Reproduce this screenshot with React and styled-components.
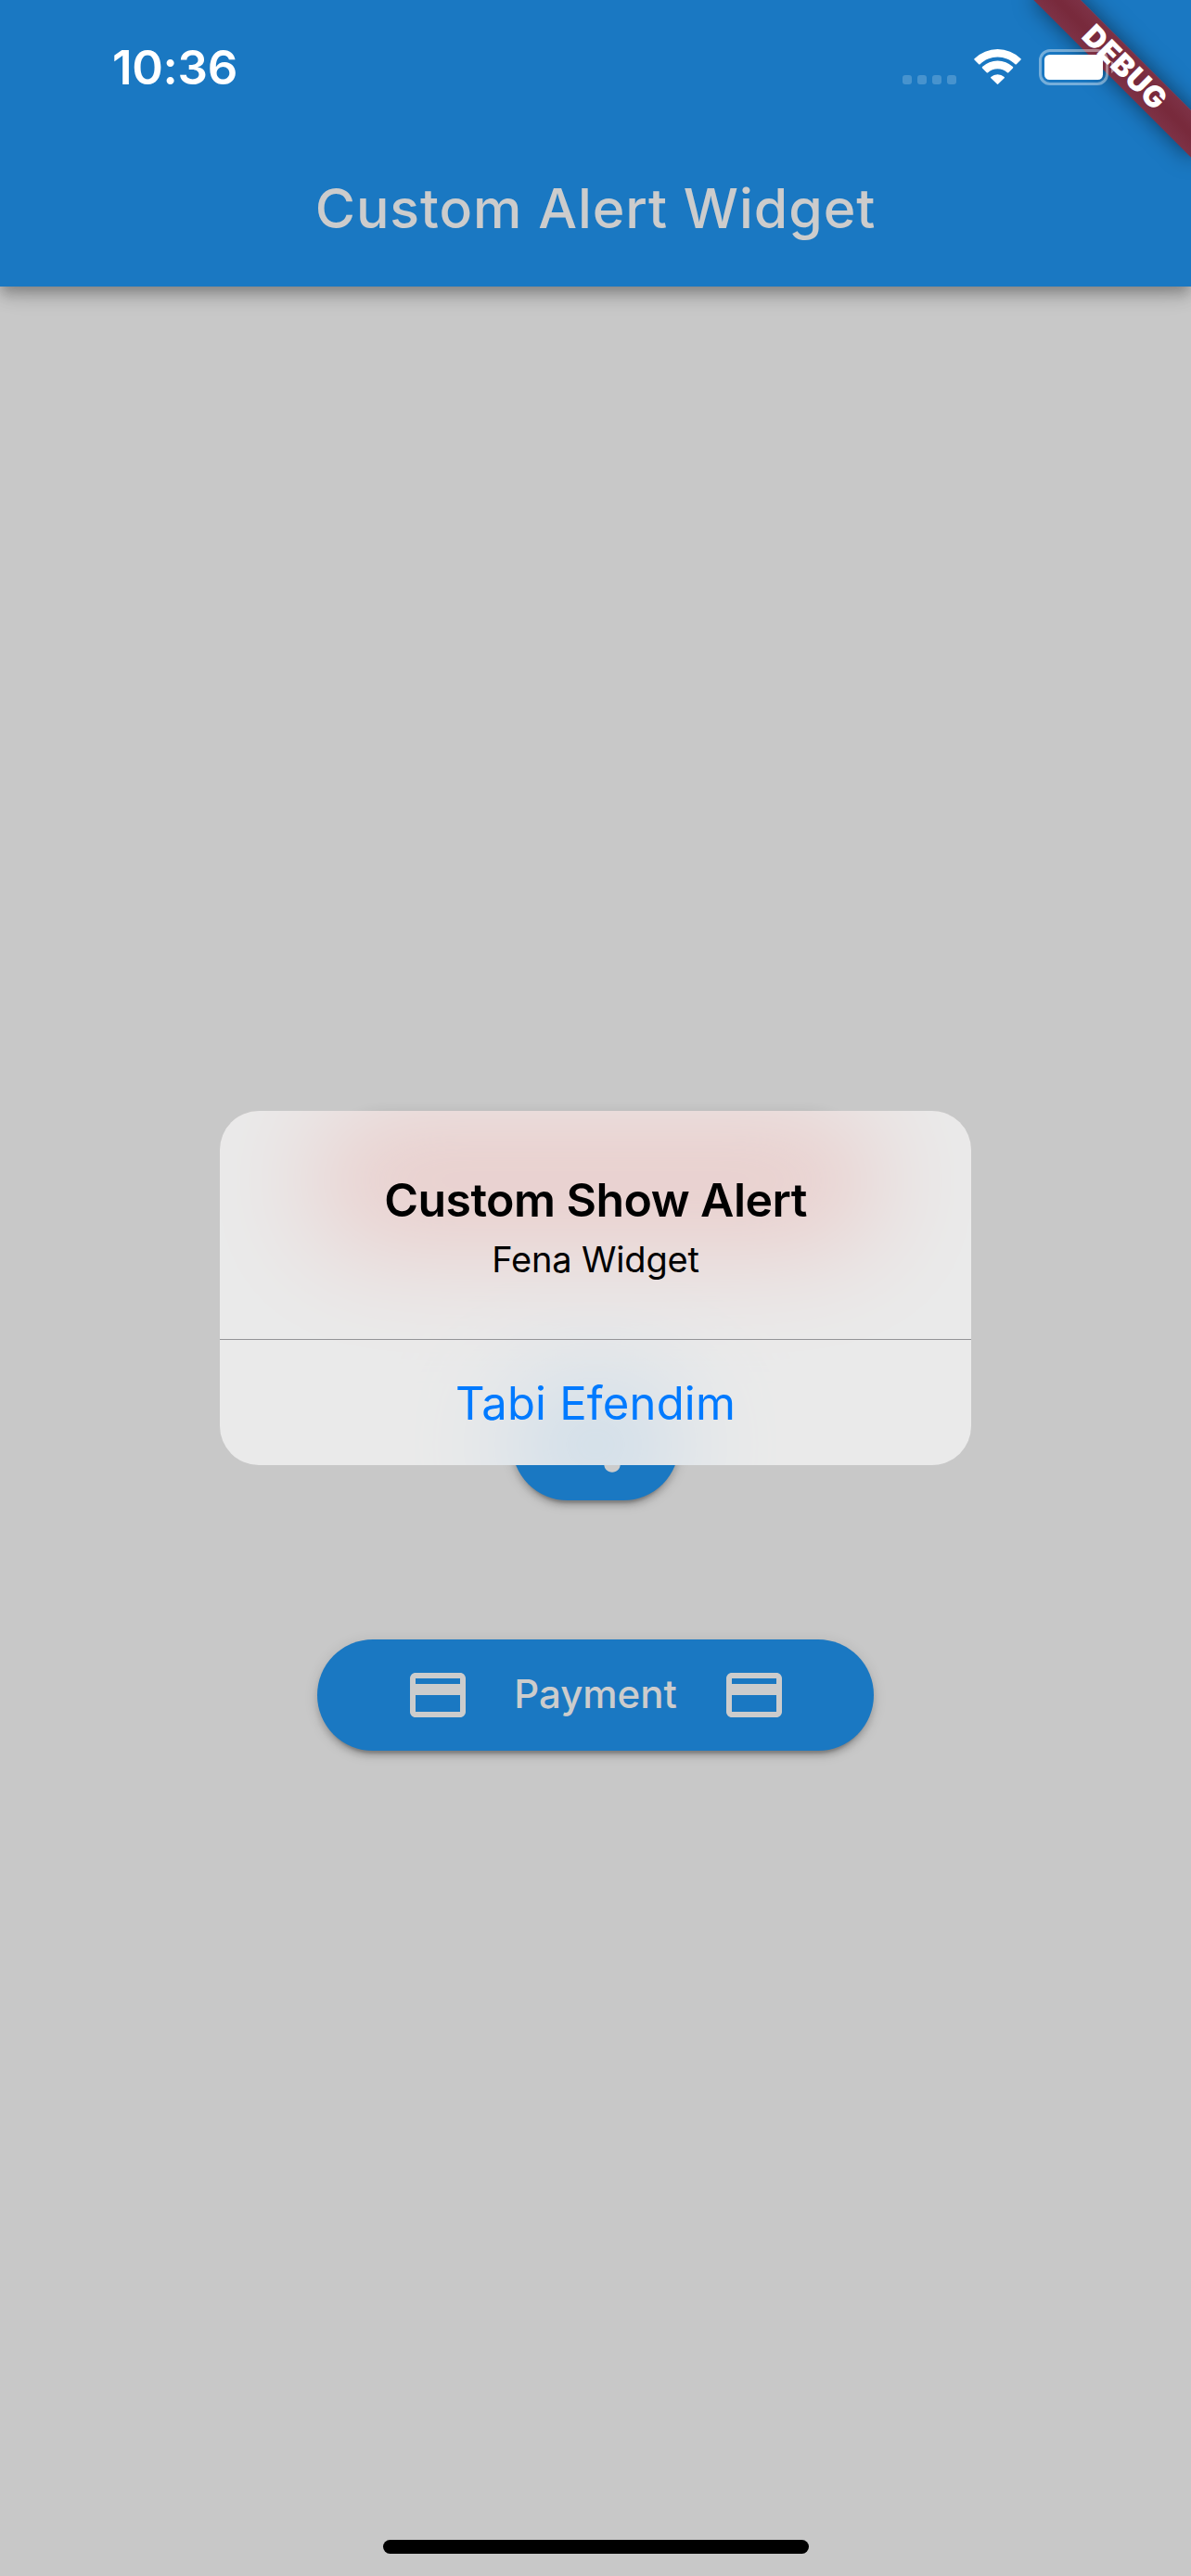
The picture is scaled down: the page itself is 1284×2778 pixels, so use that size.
import React from "react";
import styled, { createGlobalStyle, css } from "styled-components";

const GlobalStyle = createGlobalStyle`
  *, *::before { box-sizing: border-box; }
  html, body { margin: 0; padding: 0; }
  body { font-family: Inter, Roboto, "Liberation Sans", sans-serif; }
`;

const Screen = styled.div`
  position: relative;
  display: flex;
  flex-direction: column;
  width: 1284px;
  height: 2778px;
  overflow: hidden;
  background: #fafafa;
`;

const AppBar = styled.header`
  flex: none;
  display: flex;
  align-items: flex-end;
  justify-content: center;
  height: 309px;
  background: #2196f3;
  box-shadow: 0 6px 12px -3px rgba(0, 0, 0, 0.2), 0 12px 15px rgba(0, 0, 0, 0.14),
    0 3px 30px rgba(0, 0, 0, 0.12);
`;

const AppTitle = styled.h1`
  margin: 0;
  height: 168px;
  line-height: 168px;
  font-size: 59px;
  font-weight: 500;
  letter-spacing: 0.95px;
  white-space: nowrap;
  color: #fff;
`;

const Body = styled.main`
  flex: 1;
  display: flex;
  flex-direction: column;
  align-items: center;
  justify-content: center;
  gap: 150px;
  padding-bottom: 1px;
`;

const PillButton = styled.button`
  display: flex;
  align-items: center;
  justify-content: center;
  width: ${(p) => p.$width}px;
  height: ${(p) => p.$height || 120}px;
  padding: 0;
  border: 0;
  border-radius: 75px;
  background: ${(p) => p.$color || "#2196f3"};
  color: #fff;
  font: 500 42px/120px Inter, Roboto, sans-serif;
  box-shadow: 0 9px 3px -6px rgba(0, 0, 0, 0.2), 0 6px 6px rgba(0, 0, 0, 0.14),
    0 3px 15px rgba(0, 0, 0, 0.12);
`;

const ButtonLabel = styled.span`
  width: 269px;
  padding-bottom: 2px;
  text-align: center;
  white-space: nowrap;
`;

const MaterialIcon = styled.svg`
  flex: none;
  width: 72px;
  height: 72px;
  fill: currentColor;
`;

const Scrim = styled.div`
  position: absolute;
  inset: 0;
  display: flex;
  align-items: center;
  justify-content: center;
  background: rgba(0, 0, 0, 0.2);
`;

const Alert = styled.section`
  position: relative;
  display: flex;
  flex-direction: column;
  width: 810px;
  height: 382px;
  overflow: hidden;
  border-radius: 42px;
  background: #c8c8c8;
`;

/* Frosted layer: the soft glow of the buttons under the alert, veiled in light grey. */
const Frost = styled.div`
  position: absolute;
  inset: 0;

  &::after {
    content: "";
    position: absolute;
    inset: 0;
    background: rgba(242, 242, 242, 0.8);
  }
`;

const Glow = styled.div`
  position: absolute;
  top: ${(p) => p.$top}px;
  left: 50%;
  width: ${(p) => p.$width}px;
  height: ${(p) => p.$height}px;
  margin-left: ${(p) => -p.$width / 2}px;
  border-radius: 60px;
  background: ${(p) => p.$color};
  filter: blur(60px);
`;

const AlertContent = styled.div`
  position: relative;
  flex: none;
  display: flex;
  flex-direction: column;
  align-items: center;
  height: 247px;
  padding-top: 62px;
  border-bottom: 1px solid #949497;
`;

const alertText = css`
  margin: 0;
  white-space: nowrap;
  color: #000;
`;

const AlertTitle = styled.h2`
  ${alertText}
  font-size: 50px;
  line-height: 68px;
  font-weight: 600;
  letter-spacing: -0.55px;
`;

const AlertMessage = styled.p`
  ${alertText}
  font-size: 38px;
  line-height: 60px;
  font-weight: 400;
  letter-spacing: -0.15px;
`;

const AlertAction = styled.button`
  position: relative;
  flex: 1;
  min-height: 0;
  padding: 3px 0 0;
  border: 0;
  background: none;
  color: #007aff;
  font: 400 49px/100px Inter, Roboto, sans-serif;
  letter-spacing: 0.2px;
`;

const Banner = styled.div`
  position: absolute;
  top: 84px;
  left: 1164px;
  width: 240px;
  height: 36px;
  transform-origin: 120px -84px;
  transform: rotate(45deg);
  background: linear-gradient(#7d3246, #782a3c 45%, #782a3c 55%, #7d3246);
  box-shadow: 0 0 23px rgba(0, 0, 0, 0.5);
  color: #fff;
  font-size: 32px;
  font-weight: 900;
  line-height: 36px;
  letter-spacing: 0.4px;
  text-align: center;
  text-indent: 2px;
`;

const StatusBar = styled.div`
  position: absolute;
  top: 0;
  left: 0;
  right: 0;
  display: flex;
  justify-content: space-between;
  height: 141px;
  padding: 0 82px 0 121px;
  color: #fff;
`;

const Clock = styled.time`
  font-size: 51px;
  font-weight: 600;
  line-height: 146px;
  letter-spacing: -0.3px;
`;

const StatusIcons = styled.svg`
  width: 229px;
  height: 39px;
  margin-top: 53px;
  fill: #fff;
`;

const HomeIndicator = styled.div`
  position: absolute;
  bottom: 24px;
  left: 413px;
  width: 459px;
  height: 15px;
  border-radius: 8px;
  background: #000;
`;

const PaymentIcon = () => (
  <MaterialIcon viewBox="0 0 24 24">
    <path d="M20 4H4c-1.11 0-1.99.89-1.99 2L2 18c0 1.11.89 2 2 2h16c1.11 0 2-.89 2-2V6c0-1.11-.89-2-2-2zm0 14H4v-6h16v6zm0-10H4V6h16v2z" />
  </MaterialIcon>
);

const ShareIcon = () => (
  <MaterialIcon viewBox="0 0 24 24">
    <path d="M18 16.08c-.76 0-1.44.3-1.96.77L8.91 12.7c.05-.23.09-.46.09-.7s-.04-.47-.09-.7l7.05-4.11c.54.5 1.25.81 2.04.81 1.66 0 3-1.34 3-3s-1.34-3-3-3-3 1.34-3 3c0 .24.04.47.09.7L8.04 9.81C7.5 9.31 6.79 9 6 9c-1.66 0-3 1.34-3 3s1.34 3 3 3c.79 0 1.5-.31 2.04-.81l7.12 4.16c-.05.21-.08.43-.08.65 0 1.61 1.31 2.92 2.92 2.92s2.92-1.31 2.92-2.92-1.31-2.92-2.92-2.92z" />
  </MaterialIcon>
);

export default function App() {
  return (
    <>
      <GlobalStyle />
      <Screen>
        <AppBar>
          <AppTitle>Custom Alert Widget</AppTitle>
        </AppBar>
        <Body>
          <PillButton $width={600} $height={150} $color="#f44336" aria-label="Alert" />
          <PillButton $width={180} aria-label="Share">
            <ShareIcon />
          </PillButton>
          <PillButton $width={600}>
            <PaymentIcon />
            <ButtonLabel>Payment</ButtonLabel>
            <PaymentIcon />
          </PillButton>
        </Body>

        <Scrim>
          <Alert role="alertdialog">
            <Frost>
              <Glow $top={0} $width={610} $height={150} $color="#c3362b" />
              <Glow $top={300} $width={180} $height={120} $color="#1a78c2" />
            </Frost>
            <AlertContent>
              <AlertTitle>Custom Show Alert</AlertTitle>
              <AlertMessage>Fena Widget</AlertMessage>
            </AlertContent>
            <AlertAction>Tabi Efendim</AlertAction>
          </Alert>
        </Scrim>

        <Banner>DEBUG</Banner>

        <StatusBar>
          <Clock>10:36</Clock>
          <StatusIcons viewBox="0 0 229 39">
            <g fillOpacity="0.2">
              <rect x="0" y="28" width="10" height="10" rx="3" />
              <rect x="16" y="28" width="10" height="10" rx="3" />
              <rect x="32" y="28" width="10" height="10" rx="3" />
              <rect x="48" y="28" width="10" height="10" rx="3" />
            </g>
            <path d="M102.500 8.600c7 0 13.800 2.800 18.900 7.700.4.400 1 .4 1.400 0l4.700-4.700c.4-.4.4-1 0-1.400a36 36 0 0 0-50 0c-.4.400-.4 1 0 1.400l4.700 4.700c.4.400 1 .4 1.400 0 5.100-4.900 11.900-7.700 18.900-7.700z" />
            <path d="M102.500 21.200c4 0 7.600 1.500 10.400 4 .4.400 1 .4 1.400 0l4.700-4.700c.4-.4.4-1 0-1.400a24 24 0 0 0-33 0c-.4.400-.4 1 0 1.400l4.700 4.700c.4.400 1 .4 1.400 0 2.800-2.500 6.400-4 10.400-4z" />
            <path d="M109.700 31.300c.4-.4.4-1 0-1.400a11.200 11.200 0 0 0-14.400 0c-.4.400-.4 1 0 1.400l6.500 6.300c.4.400 1 .4 1.400 0z" />
            <rect x="148.500" y="1.500" width="72" height="36" rx="10.500" fill="none" stroke="#fff" strokeOpacity="0.4" strokeWidth="3" />
            <rect x="153" y="6" width="63" height="27" rx="5.500" />
            <path d="M225 13v13c2.500-1.100 4-3.600 4-6.500s-1.500-5.400-4-6.500z" fillOpacity="0.4" />
          </StatusIcons>
        </StatusBar>
        <HomeIndicator />
      </Screen>
    </>
  );
}
